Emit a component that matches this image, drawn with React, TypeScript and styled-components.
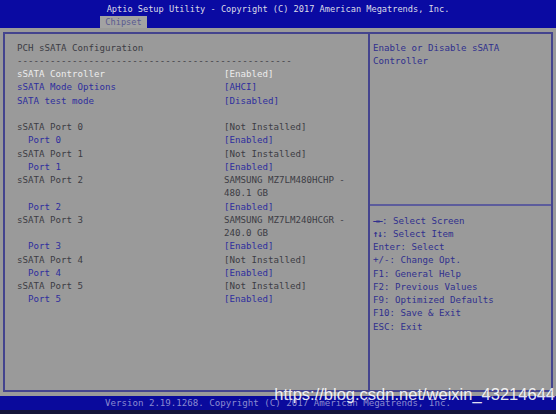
import React from "react";
import styled, { createGlobalStyle } from "styled-components";

type Tone = "grey" | "blue" | "white";

const toneColor: Record<Tone, string> = {
  grey: "#3c3c44",
  blue: "#2e2e9e",
  white: "#ececec",
};

const GlobalStyle = createGlobalStyle`
  html, body {
    margin: 0;
    padding: 0;
    background: #9a9a9a;
  }
  body {
    width: 556px;
    height: 414px;
    overflow: hidden;
  }
`;

const Screen = styled.div`
  position: relative;
  width: 556px;
  height: 414px;
  display: flex;
  flex-direction: column;
  background: #9a9a9a;
  font-family: "DejaVu Sans Mono", "Liberation Mono", monospace;
  font-size: 9.15px;
  overflow: hidden;
`;

const TopBar = styled.header`
  height: 28px;
  flex-shrink: 0;
  display: flex;
  flex-direction: column;
  background: #0a0aa2;
`;

const Title = styled.div`
  padding-top: 2px;
  height: 13px;
  line-height: 14px;
  text-align: center;
  color: #dcdce8;
  font-size: 8.65px;
`;

const TabRow = styled.div`
  display: flex;
  margin-top: 1px;
  padding-left: 100px;
`;

const Tab = styled.div`
  width: 47px;
  height: 12px;
  line-height: 13px;
  text-align: center;
  background: #a2a2a2;
  color: #5a5a90;
  font-size: 8.65px;
`;

const Main = styled.main`
  flex: 1;
  display: flex;
  padding: 4px 3px;
  min-height: 0;
`;

const Frame = styled.div`
  flex: 1;
  display: flex;
  border: 2px solid #44448e;
`;

const LeftPanel = styled.section`
  width: 363px;
  flex-shrink: 0;
  padding: 7.5px 0 0 12px;
  box-sizing: border-box;
`;

const Row = styled.div`
  display: grid;
  grid-template-columns: 207px 1fr;
  height: 13.25px;
  line-height: 13.25px;
  white-space: pre;
`;

const Label = styled.span<{ $tone: Tone; $indent?: boolean }>`
  color: ${(p) => toneColor[p.$tone]};
  padding-left: ${(p) => (p.$indent ? "11px" : "0")};
`;

const Value = styled.span<{ $tone: Tone }>`
  color: ${(p) => toneColor[p.$tone]};
`;

const RightPanel = styled.aside`
  flex: 1;
  display: flex;
  flex-direction: column;
  border-left: 2px solid #44448e;
`;

const HelpTop = styled.div`
  height: 170px;
  padding: 7.5px 0 0 3px;
  box-sizing: border-box;
`;

const HelpDivider = styled.div`
  height: 2px;
  background: #5c5c9c;
`;

const Keys = styled.div`
  padding: 8.5px 0 0 3px;
`;

const HelpLine = styled.div`
  height: 13.25px;
  line-height: 13.25px;
  color: #30308e;
  white-space: pre;
`;

const Arrows = styled.span`
  font-weight: bold;
  letter-spacing: -1px;
`;

const BottomBar = styled.footer`
  height: 18px;
  flex-shrink: 0;
  display: flex;
  flex-direction: column;
  background: #141438;
`;

const Version = styled.div`
  height: 14px;
  line-height: 15px;
  text-align: center;
  background: #0a0a9c;
  color: #8a8ad0;
`;

const Watermark = styled.div`
  position: absolute;
  top: 385px;
  right: 1px;
  font-family: "Liberation Sans", Arial, sans-serif;
  font-size: 16.5px;
  line-height: 19px;
  color: rgba(255, 255, 255, 0.9);
  white-space: nowrap;
`;

type Item = { label: string; tone: Tone; indent?: boolean; value?: string; vtone?: Tone };

const rows: Item[] = [
  { label: "PCH sSATA Configuration", tone: "grey" },
  { label: "-".repeat(50), tone: "grey" },
  { label: "sSATA Controller", tone: "white", value: "[Enabled]", vtone: "white" },
  { label: "sSATA Mode Options", tone: "blue", value: "[AHCI]", vtone: "blue" },
  { label: "SATA test mode", tone: "blue", value: "[Disabled]", vtone: "blue" },
  { label: "", tone: "grey" },
  { label: "sSATA Port 0", tone: "grey", value: "[Not Installed]", vtone: "grey" },
  { label: "Port 0", tone: "blue", indent: true, value: "[Enabled]", vtone: "blue" },
  { label: "sSATA Port 1", tone: "grey", value: "[Not Installed]", vtone: "grey" },
  { label: "Port 1", tone: "blue", indent: true, value: "[Enabled]", vtone: "blue" },
  { label: "sSATA Port 2", tone: "grey", value: "SAMSUNG MZ7LM480HCHP -", vtone: "grey" },
  { label: "", tone: "grey", value: "480.1 GB", vtone: "grey" },
  { label: "Port 2", tone: "blue", indent: true, value: "[Enabled]", vtone: "blue" },
  { label: "sSATA Port 3", tone: "grey", value: "SAMSUNG MZ7LM240HCGR -", vtone: "grey" },
  { label: "", tone: "grey", value: "240.0 GB", vtone: "grey" },
  { label: "Port 3", tone: "blue", indent: true, value: "[Enabled]", vtone: "blue" },
  { label: "sSATA Port 4", tone: "grey", value: "[Not Installed]", vtone: "grey" },
  { label: "Port 4", tone: "blue", indent: true, value: "[Enabled]", vtone: "blue" },
  { label: "sSATA Port 5", tone: "grey", value: "[Not Installed]", vtone: "grey" },
  { label: "Port 5", tone: "blue", indent: true, value: "[Enabled]", vtone: "blue" },
];

const keys: [string, string][] = [
  ["→←", ": Select Screen"],
  ["↑↓", ": Select Item"],
  ["", "Enter: Select"],
  ["", "+/-: Change Opt."],
  ["", "F1: General Help"],
  ["", "F2: Previous Values"],
  ["", "F9: Optimized Defaults"],
  ["", "F10: Save & Exit"],
  ["", "ESC: Exit"],
];

export default function App() {
  return (
    <>
      <GlobalStyle />
      <Screen>
        <TopBar>
          <Title>Aptio Setup Utility - Copyright (C) 2017 American Megatrends, Inc.</Title>
          <TabRow>
            <Tab>Chipset</Tab>
          </TabRow>
        </TopBar>
        <Main>
          <Frame>
            <LeftPanel>
              {rows.map((r, i) => (
                <Row key={i}>
                  <Label $tone={r.tone} $indent={r.indent}>
                    {r.label}
                  </Label>
                  <Value $tone={r.vtone ?? "grey"}>{r.value ?? ""}</Value>
                </Row>
              ))}
            </LeftPanel>
            <RightPanel>
              <HelpTop>
                <HelpLine>Enable or Disable sSATA</HelpLine>
                <HelpLine>Controller</HelpLine>
              </HelpTop>
              <HelpDivider />
              <Keys>
                {keys.map(([a, t]) => (
                  <HelpLine key={t}>
                    {a && <Arrows>{a}</Arrows>}
                    {t}
                  </HelpLine>
                ))}
              </Keys>
            </RightPanel>
          </Frame>
        </Main>
        <BottomBar>
          <Version>Version 2.19.1268. Copyright (C) 2017 American Megatrends, Inc.</Version>
        </BottomBar>
        <Watermark>https://blog.csdn.net/weixin_43214644</Watermark>
      </Screen>
    </>
  );
}
